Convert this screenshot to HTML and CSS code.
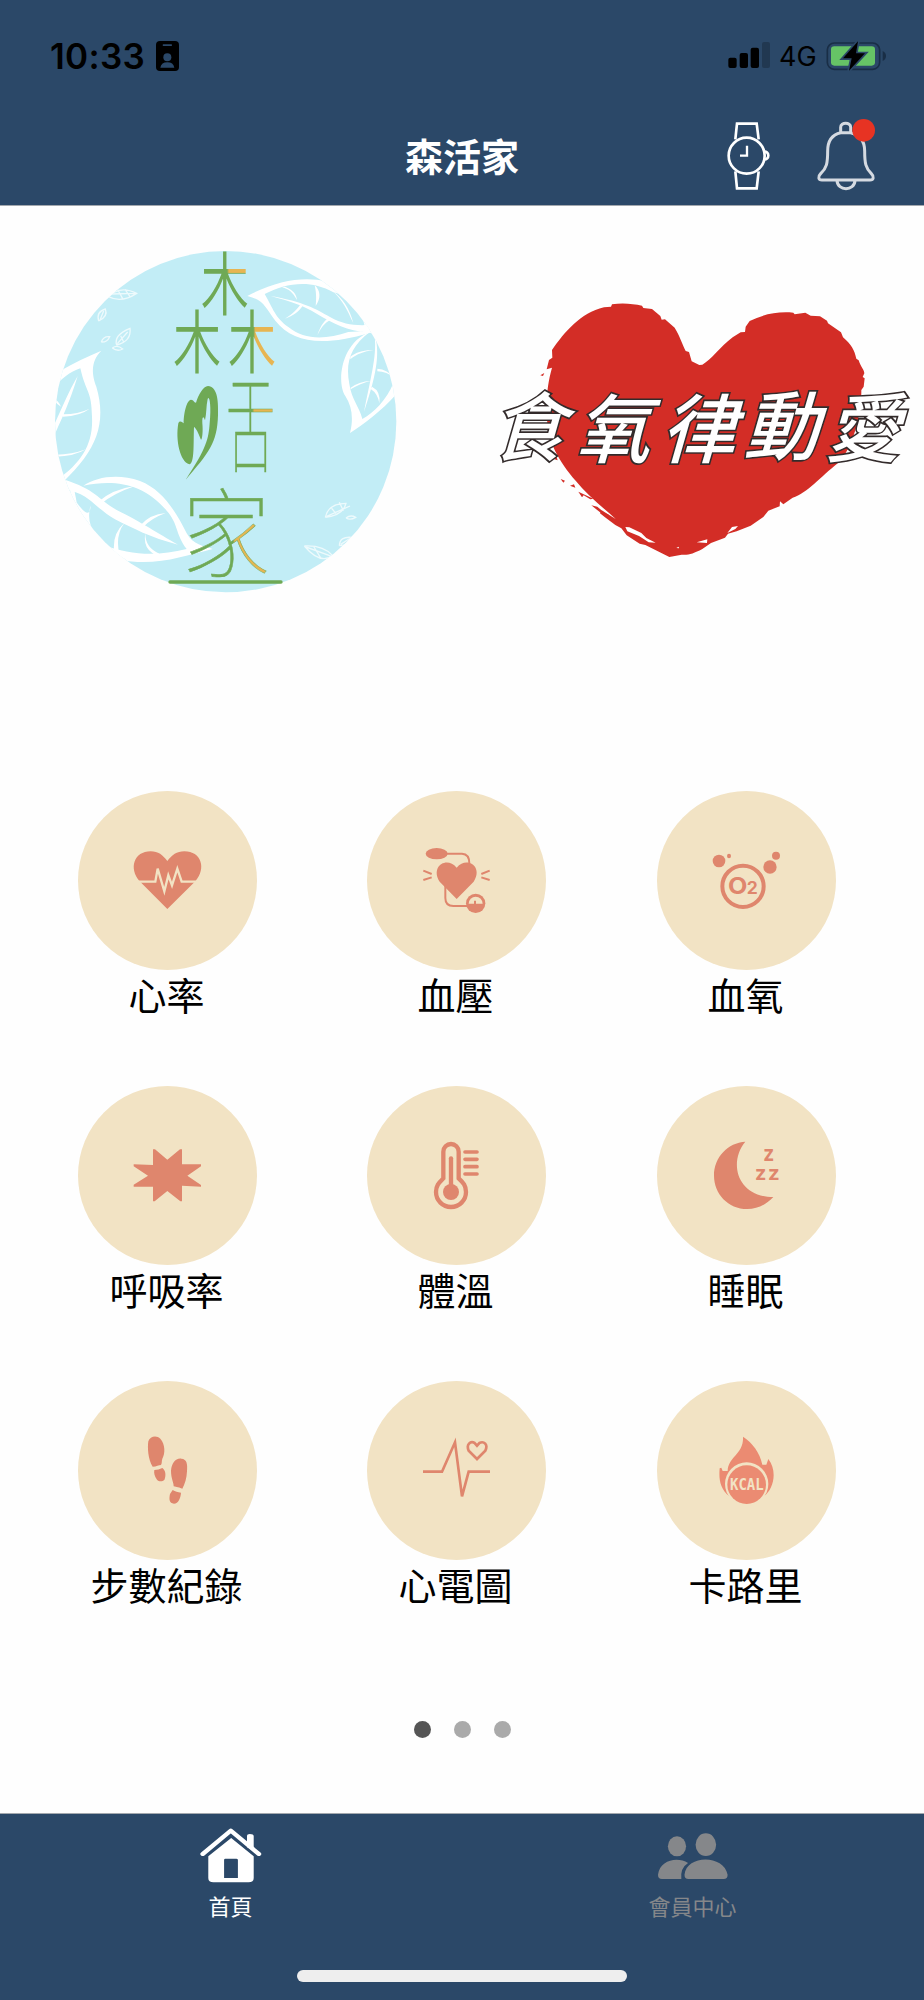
FILE: index.html
```
<!DOCTYPE html>
<html lang="zh-Hant">
<head>
    <meta charset="UTF-8">
    <meta name="viewport" content="width=device-width, initial-scale=1.0">
    <title>森活家</title>
    <link rel="stylesheet" href="styles.css">
</head>
<body>
    <header>
        <div class="status">
            <div class="status-left">
                <span class="time">10:33</span>
                <svg width="23" height="30" viewBox="0 0 69 90">
                    <rect width="69" height="90" rx="12"/>
                    <rect class="navy" x="20" y="10" width="28" height="5" rx="2"/>
                    <circle class="navy" cx="34" cy="49" r="12"/>
                    <path class="navy" d="M13 80Q16 64 34 64Q52 64 55 80Z"/>
                </svg>
            </div>
            <div class="status-right">
                <svg width="43" height="27" viewBox="798 127 129 81">
                    <rect x="799" y="174" width="25" height="31" rx="6"/>
                    <rect x="833" y="160" width="25" height="45" rx="6"/>
                    <rect x="866" y="144" width="25" height="61" rx="6"/>
                    <rect x="900" y="127" width="24" height="78" rx="6" opacity=".22"/>
                </svg>
                <span class="net">4G</span>
                <svg width="61" height="30" viewBox="1092 121 183 90">
                    <rect x="1096" y="127" width="157" height="79" rx="21" fill="none" stroke="#192e46" stroke-width="5"/>
                    <path d="M1262 151Q1272 156 1272 166Q1272 176 1262 181Z" fill="#192e46"/>
                    <rect x="1107" y="137" width="132" height="58" rx="10" fill="#66c466"/>
                    <path d="M1188 122L1143 173H1169L1161 210L1209 158H1182Z" stroke="#2b4868" stroke-width="10" paint-order="stroke"/>
                </svg>
            </div>
        </div>
        <div class="title-bar">
            <h1>森活家</h1>
            <div class="actions">
                <svg class="line-icon" width="43" height="70" viewBox="795 365 129 210">
                    <path d="M820 420L825 373H884L890 420M820 516L825 567H884L890 516M904 457C924 453 924 484 904 480"/>
                    <circle cx="854" cy="469" r="54"/>
                    <path d="M855 439V469H834" stroke-width="7"/>
                </svg>
                <svg class="line-icon bell" width="60" height="73" viewBox="1062 352 180 219">
                    <path d="M1136 396V380C1136 364 1166 364 1166 380V396M1136 396C1110 402 1097 421 1097 451C1097 488 1094 502 1076 519C1067 528 1069 538 1080 538H1224C1235 538 1237 528 1228 519C1211 502 1208 488 1208 451C1208 421 1192 402 1166 396ZM1125 540C1127 572 1177 572 1179 540"/>
                    <circle class="badge" cx="1205" cy="389" r="34"/>
                </svg>
            </div>
        </div>
    </header>
    <main>
        <section class="logos">
            <svg width="370" height="360" viewBox="0 0 1110 1080">
                <clipPath id="round"><circle cx="557" cy="545" r="512"/></clipPath>
                <!-- 綠字加橘色筆劃 -->
                <pattern id="top-fill" x="0" y="-200" width="200" height="250" patternUnits="userSpaceOnUse">
                    <rect width="200" height="250" fill="#6fa955"/>
                    <rect x="108" y="60" width="92" height="39" fill="#e7b552"/>
                </pattern>
                <pattern id="right-fill" x="0" y="-200" width="200" height="250" patternUnits="userSpaceOnUse">
                    <rect width="200" height="250" fill="#6fa955"/>
                    <rect x="104" y="60" width="96" height="190" fill="#e7b552"/>
                </pattern>
                <pattern id="tongue-fill" x="0" y="-200" width="200" height="250" patternUnits="userSpaceOnUse">
                    <rect width="200" height="250" fill="#6fa955"/>
                    <rect x="106" y="80" width="94" height="40" fill="#e7b552"/>
                </pattern>
                <pattern id="home-fill" x="0" y="-200" width="200" height="250" patternUnits="userSpaceOnUse">
                    <rect width="200" height="250" fill="#6fa955"/>
                    <rect x="112" y="102" width="88" height="148" fill="#e7b552"/>
                </pattern>
                <circle cx="557" cy="545" r="512" fill="#c2edf6"/>
                <g clip-path="url(#round)">
                    <!-- 右上葉子 -->
                    <g class="leaf">
                        <path d="M622 168C710 121 790 108 860 124L1000 245L1020 290L990 278C850 320 760 310 706 242C674 202 674 181 622 168ZM674 162C700 206 704 232 745 261C794 302 860 298 925 276C1000 270 970 278 975 262C960 190 930 170 880 157C810 116 735 130 674 162Z" fill-rule="evenodd"/>
                        <path d="M692 168C790 185 830 208 870 231C910 253 940 257 985 255L990 275C930 278 880 250 830 221C790 196 750 184 692 168Z"/>
                        <path d="M735 140C758 149 770 162 771 180C757 156 748 148 726 142ZM824 136C842 152 843 175 827 198C830 170 828 155 824 136ZM790 194C777 216 760 226 735 236C760 220 770 210 782 192ZM870 240C853 250 841 265 832 286C840 260 850 246 862 236ZM880 155C905 172 930 205 940 250C920 205 910 185 880 155Z"/>
                    </g>
                    <g class="leaf">
                        <path d="M990 275C900 310 890 430 916 468C936 500 941 535 930 579C970 553 1030 510 1080 450L1060 430C1040 480 1000 520 967 537C958 500 935 480 928 432C916 370 930 320 990 275Z"/>
                        <path d="M1008 300C1020 360 1000 430 972 516C990 420 1011 350 1004 290Z"/>
                        <path d="M931 350C950 336 972 329 1001 331C970 334 952 342 931 358ZM1012 386Q1042 388 1064 414Q1040 395 1012 394ZM932 443Q955 425 994 422Q960 430 932 448ZM996 440Q1023 454 1018 490Q1013 460 992 447Z"/>
                    </g>
                    <!-- 左邊葉子 -->
                    <g class="leaf">
                        <path d="M60 393C100 370 140 350 184 332C148 367 158 410 169 440C201 550 170 630 70 725L64 710C130 660 160 605 156 530C155 450 138 460 121 385C90 395 62 418 45 440Z"/>
                        <path d="M113 408C85 500 62 540 42 590V555C66 505 83 460 113 408ZM45 478Q54 482 63 500Q49 493 42 480ZM67 523Q110 524 149 506Q120 528 69 530ZM48 644Q95 644 138 628Q100 650 48 650Z"/>
                    </g>
                    <g class="leaf">
                        <path d="M130 737C170 710 235 700 300 723C370 750 410 820 440 880C460 915 490 918 518 927C430 948 350 980 240 960L190 915C270 945 350 950 440 927C405 880 415 850 380 812C310 728 220 718 130 737Z"/>
                        <path d="M70 718C170 750 170 775 230 810C310 850 350 878 414 914C330 893 280 865 225 838C160 800 145 755 70 750Z"/>
                        <path d="M174 786Q215 748 287 737Q220 760 182 792ZM302 855Q330 823 377 819Q333 835 309 862ZM316 880Q315 922 358 941Q350 950 336 938Q309 920 316 880ZM253 849Q223 890 240 950L222 930Q218 880 253 849ZM152 796Q137 848 170 888Q205 930 260 942L240 970Q130 900 80 740Q150 860 152 796ZM103 750L117 824L86 755Z"/>
                    </g>
                    <!-- 小葉子 -->
                    <g class="small-leaf">
                        <path d="M205 170Q240 135 290 160Q245 190 205 170M215 162L285 160M232 147L248 176M255 148L270 170M176 243Q168 216 196 207Q205 229 176 243M180 240L191 213M230 315Q220 286 270 265Q275 303 230 315M232 311L263 276M242 287L251 306M184 306Q190 288 209 290Q202 307 184 306M217 324Q232 313 248 327Q232 336 217 324"/>
                        <path d="M856 832Q865 790 918 790Q909 826 856 832M860 829L930 798M875 805L888 821M898 787L910 812M918 834Q932 823 947 832Q931 842 918 834M793 918Q850 915 878 947Q840 974 793 918M798 921L875 949M820 918L843 955M898 917Q899 889 934 892Q929 917 898 917M902 913L932 894"/>
                    </g>
                </g>
                <g class="logo-text">
                    <text transform="translate(482 209) scale(.76 1.09)" fill="url(#top-fill)">木</text>
                    <text transform="translate(399 384) scale(.76 1.09)">木</text>
                    <text transform="translate(564 384) scale(.76 1.09)" fill="url(#right-fill)">木</text>
                    <text class="thin" transform="translate(557 673) scale(.78 1.66)" fill="url(#tongue-fill)">舌</text>
                    <text class="thin" transform="translate(425 990) scale(1.4 1.54)" fill="url(#home-fill)">家</text>
                </g>
                <path d="M437 719C500 625 506 595 509 550C515 490 507 465 503 477C498 500 500 520 495 541C490 525 486 530 487 550C490 580 485 610 481 595C475 578 468 565 462 560C460 610 464 670 448 673C420 665 406 600 415 550C418 540 426 545 431 550C431 520 440 480 453 479C462 479 461 488 468 488C475 465 490 438 504 438C530 441 536 475 534 525C532 610 505 640 437 719Z" fill="#6fa955"/>
                <path d="M390 1026H723" stroke="#6fa955" stroke-width="10" stroke-linecap="round"/>
            </svg>
            <svg class="heart-logo" width="444" height="300" viewBox="0 0 1332 900">
                <path d="M200 268L207 240L217 233L216 210C255 155 300 100 372 82L393 80L396 73C430 68 460 72 486 77L490 84L516 87L541 108L545 119L555 118L584 143C600 170 606 190 617 213L627 216L635 244L658 255L667 254C695 239 720 200 758 172L782 157L795 156L797 140L809 123C850 103 890 94 940 98L944 103L976 98L992 107L1020 109L1041 122L1044 130L1083 157L1089 172C1115 195 1123 209 1129 236L1136 241C1143 263 1152 267 1153 280L1148 291L1154 295L1151 320L1144 330C1145 400 1120 505 1074 549C1020 592 982 639 938 653L910 673L900 664L899 679L865 692L850 711L812 737L770 754L744 761L735 773L693 789L667 807C640 821 625 826 605 824L568 831L526 810L496 795L479 791L440 766L424 745L406 735L374 711L360 700L365 691L407 717C360 675 319 642 287 602C238 545 202 486 201 410C198 350 203 310 216 263Z" fill="#d32d26"/>
                <path d="M181 286L193 279L189 288ZM210 520L227 523L233 541L214 535ZM242 597L255 602L250 608ZM270 617L282 613L286 623ZM295 635L340 656L331 658L311 646L306 652ZM334 676L352 680L374 699L386 704L379 712Z" fill="#d32d26"/>
                <path d="M436 741L448 742L484 759L499 774L527 788L506 787L477 768L442 754ZM650 787L682 778L681 789ZM742 759L756 741L774 738L766 747ZM589 804L596 800L597 805Z" fill="#fff"/>
                <g class="heart-text">
                    <text transform="translate(30 525) skewX(-16)">食</text>
                    <text transform="translate(284 530) skewX(-16)">氧</text>
                    <text transform="translate(540 530) skewX(-16)">律</text>
                    <text transform="translate(790 523) skewX(-16)">動</text>
                    <text transform="translate(1034 528) skewX(-16)">愛</text>
                </g>
            </svg>
        </section>
        <section class="menu">
            <div class="item">
                <svg viewBox="54 33 537 537">
                    <path d="M322 387L239 304C205 265 222 214 272 214C295 214 308 225 322 243C336 225 350 214 373 214C424 214 440 265 406 304Z"/>
                    <path d="M236 305H286L293 266L313 334L325 286L336 316L352 266L365 305H412" fill="none" stroke="#f2e3c4" stroke-width="7"/>
                </svg>
                <p>心率</p>
            </div>
            <div class="item">
                <svg viewBox="921 33 537 537">
                    <path d="M1190 357L1139 305C1110 260 1160 227 1190 263C1220 227 1271 260 1241 305Z"/>
                    <ellipse cx="1130" cy="221" rx="33" ry="17"/>
                    <path class="stroke" d="M1160 221H1206Q1228 222 1228 250M1156 318V354Q1156 378 1180 378H1222M1090 272L1115 282M1090 300L1115 292M1289 272L1264 282M1289 300L1264 292"/>
                    <circle cx="1247" cy="370" r="29"/>
                    <path class="beige" d="M1226 371A21 21 0 0 1 1268 371Z"/>
                    <path class="stroke" d="M1245 362V374"/>
                </svg>
                <p>血壓</p>
            </div>
            <div class="item">
                <svg viewBox="471 33 537 537">
                    <circle cx="657" cy="243" r="19"/>
                    <ellipse cx="687" cy="228" rx="6" ry="7"/>
                    <circle cx="828" cy="227" r="12"/>
                    <circle cx="810" cy="261" r="20"/>
                    <circle cx="729" cy="319" r="62" fill="none" stroke="#df866d" stroke-width="12"/>
                    <text x="684" y="341" font-size="70" textLength="58" lengthAdjust="spacingAndGlyphs">O</text>
                    <text x="740" y="341" font-size="52" textLength="33" lengthAdjust="spacingAndGlyphs">2</text>
                </svg>
                <p>血氧</p>
            </div>
            <div class="item">
                <svg viewBox="54 17 537 537">
                    <path d="M279 207H285L322 238L360 207H366V252L423 252V258L382 286L423 314V319L366 316V363H361L322 332L284 363H279V319L221 319V313L264 286L221 258V252L279 254Z"/>
                </svg>
                <p>呼吸率</p>
            </div>
            <div class="item">
                <svg viewBox="921 17 537 537">
                    <path d="M1150 214A23 23 0 0 1 1196 214V294C1210 307 1218 315 1218 335A45 45 0 0 1 1128 335C1128 315 1137 307 1150 294Z" fill="none" stroke="#df866d" stroke-width="13"/>
                    <circle cx="1173" cy="335" r="24"/>
                    <path d="M1173 234V320" stroke="#df866d" stroke-width="13" stroke-linecap="round"/>
                    <path d="M1215 215H1251M1215 237H1251M1215 259H1251M1215 281H1251" stroke="#df866d" stroke-width="11" stroke-linecap="round"/>
                </svg>
                <p>體溫</p>
            </div>
            <div class="item">
                <svg viewBox="471 17 537 537">
                    <path d="M736 184C685 245 710 350 820 350C796 375 772 386 742 386C684 386 642 340 642 286C642 230 684 187 736 184Z"/>
                    <text x="790" y="242" font-size="65" textLength="33" lengthAdjust="spacingAndGlyphs">z</text>
                    <text x="765" y="299" font-size="60" textLength="34" lengthAdjust="spacingAndGlyphs">z</text>
                    <text x="804" y="299" font-size="60" textLength="35" lengthAdjust="spacingAndGlyphs">z</text>
                </svg>
                <p>睡眠</p>
            </div>
            <div class="item">
                <svg viewBox="54 35 537 537">
                    <path d="M278 292C264 270 262 235 265 216C270 200 290 197 301 208C316 225 316 252 307 268C304 277 307 280 303 287C296 287 290 292 278 292ZM283 302C292 302 299 299 307 296C317 303 319 318 313 332C307 337 297 338 291 331C284 321 281 312 283 302Z"/>
                    <path d="M367 358C353 353 345 352 341 351C341 338 333 328 333 304C335 282 346 266 364 268C381 269 383 285 381 306C380 328 375 343 367 358ZM338 362C346 366 353 369 363 370C362 386 355 403 342 403C327 402 327 389 330 374Z"/>
                </svg>
                <p>步數紀錄</p>
            </div>
            <div class="item">
                <svg viewBox="921 35 537 537">
                    <path d="M1089 307H1146L1185 219L1206 381L1226 307H1290M1251 269L1226 244C1218 226 1231 214 1244 221L1251 229L1258 221C1272 214 1285 226 1276 244Z" fill="none" stroke="#df866d" stroke-width="8"/>
                </svg>
                <p>心電圖</p>
            </div>
            <div class="item kcal">
                <svg viewBox="471 35 537 537">
                    <path d="M688 381C660 358 656 330 659 297L664 295L668 305H683C684 262 732 254 729 202C758 221 779 249 787 286H799L805 269C834 306 820 362 791 381Z"/>
                    <circle class="beige" cx="740" cy="344" r="65"/>
                    <circle cx="740" cy="346" r="58"/>
                    <text x="690" y="362" font-size="45" textLength="101" lengthAdjust="spacingAndGlyphs">KCAL</text>
                </svg>
                <p>卡路里</p>
            </div>
        </section>
        <div class="dots">
            <span class="dot active"></span>
            <span class="dot"></span>
            <span class="dot"></span>
        </div>
    </main>
    <footer>
        <nav>
            <a class="tab active">
                <svg width="62" height="56" viewBox="124 382 157 168" preserveAspectRatio="none">
                    <path d="M131 460L202 390L273 460" fill="none" stroke="#fff" stroke-width="12" stroke-linecap="round" stroke-linejoin="round"/>
                    <path d="M243 440V406Q243 400 250 400Q260 400 260 406V450Z"/>
                    <path d="M203 412L260 467V532Q260 545 247 545H158Q145 545 145 532V467ZM188 474Q185 474 185 478V532H220V478Q220 474 216 474Z" fill-rule="evenodd"/>
                </svg>
                <span>首頁</span>
            </a>
            <a class="tab">
                <svg width="70" height="47" viewBox="1285 400 177 141" preserveAspectRatio="none">
                    <ellipse cx="1333" cy="440" rx="23" ry="30"/>
                    <ellipse cx="1406" cy="435" rx="26" ry="34"/>
                    <path d="M1295 538Q1285 538 1285 525C1290 480 1335 470 1361 490Q1341 505 1344 538ZM1362 538Q1352 538 1352 525C1357 464 1452 464 1461 525Q1461 538 1451 538Z"/>
                </svg>
                <span>會員中心</span>
            </a>
        </nav>
        <div class="home-bar"></div>
    </footer>
</body>
</html>
```

FILE: styles.css
```
* {
    box-sizing: border-box;
}
body {
    margin: 0;
    height: 2000px;
    display: flex;
    flex-direction: column;
    overflow: hidden;
    font-family: "Noto Sans CJK TC", sans-serif;
    background-color: #fefefe;
}
svg {
    display: block;
}
header {
    height: 206px;
    background-color: #2b4868;
    border-bottom: 1px solid #a3a8ae;
}
.status {
    height: 111px;
    padding: 0 37px 0 50px;
    display: flex;
    justify-content: space-between;
    align-items: center;
    font-family: Inter, sans-serif;
}
.status-left,
.status-right {
    display: flex;
    align-items: center;
}
.time {
    font-size: 35px;
    font-weight: 600;
    width: 106px;
    letter-spacing: 0.3px;
}
.net {
    font-size: 27px;
    font-weight: 400;
    width: 47px;
    margin-left: 8px;
    padding-top: 2px;
}
.navy {
    fill: #2b4868;
}
.title-bar {
    height: 94px;
    padding: 0 48px;
    display: grid;
    grid-template-columns: 1fr auto 1fr;
    align-items: center;
}
h1 {
    grid-column: 2;
    margin: 0 0 7px;
    color: white;
    font-size: 38px;
    line-height: 50px;
    font-weight: 700;
}
.actions {
    margin-bottom: 4px;
    display: flex;
    justify-content: flex-end;
    align-items: center;
    gap: 46px;
}
.line-icon {
    fill: none;
    stroke: white;
    stroke-width: 8;
}
.bell {
    margin-bottom: 4px;
    stroke: #d5dae1;
    stroke-width: 9;
}
.badge {
    fill: #e73323;
    stroke: none;
}
main {
    flex: 1;
}
.logos {
    height: 585px;
    padding: 34px 0 0 40px;
    display: flex;
    align-items: flex-start;
    gap: 70px;
}
.logos svg {
    overflow: visible;
}
.heart-logo {
    margin-top: 40px;
}
.leaf {
    fill: white;
}
.small-leaf {
    fill: none;
    stroke: white;
    stroke-opacity: .7;
    stroke-width: 4;
}
.logo-text {
    fill: #6fa955;
    font-size: 190px;
    font-weight: 350;
}
.logo-text .thin {
    font-weight: 100;
    stroke: #6fa955;
    stroke-width: 1;
}
.heart-text {
    fill: white;
    stroke: #332b2b;
    stroke-width: 10;
    paint-order: stroke;
    font-size: 225px;
    font-weight: 500;
}
.menu {
    padding-left: 78px;
    display: grid;
    grid-template-columns: 289px 290px 179px;
    row-gap: 68px;
}
.item {
    width: 179px;
}
.item svg {
    width: 179px;
    height: 179px;
    border-radius: 50%;
    background-color: #f2e3c4;
    fill: #df866d;
    font-family: Inter, sans-serif;
    font-weight: 700;
}
.item p {
    margin: 0 1px 0 -1px;
    font-size: 38px;
    line-height: 48px;
    text-align: center;
    white-space: nowrap;
}
.item .stroke {
    fill: none;
    stroke: #df866d;
    stroke-width: 6;
}
.item .beige,
.item.kcal text {
    fill: #f2e3c4;
}
.item.kcal svg {
    fill: #eb8b72;
    font-family: "DejaVu Sans Mono", monospace;
}
.dots {
    margin-top: 113px;
    display: flex;
    justify-content: center;
    gap: 23px;
}
.dot {
    width: 17px;
    height: 17px;
    border-radius: 50%;
    background-color: #aaa;
}
.dot.active {
    background-color: #555;
}
footer {
    height: 187px;
    background-color: #2b4868;
    border-top: 1px solid #a3a8ae;
}
nav {
    height: 156px;
    display: flex;
}
.tab {
    flex: 1;
    padding: 8px 1px 0 0;
    display: flex;
    flex-direction: column;
    align-items: center;
    color: #85878a;
    fill: #85878a;
    font-size: 22px;
    line-height: 30px;
}
.tab svg {
    margin: auto 0;
}
.tab span {
    margin-bottom: 50px;
}
.tab.active {
    color: white;
    fill: white;
}
.home-bar {
    width: 330px;
    height: 12px;
    margin: 0 auto;
    border-radius: 6px;
    background-color: #eee;
}
```
